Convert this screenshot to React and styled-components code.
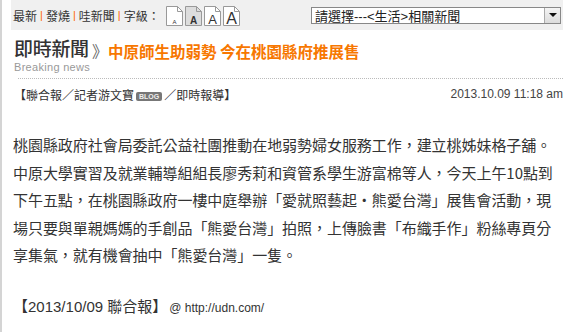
import React from "react";
import styled, { createGlobalStyle } from "styled-components";

const Global = createGlobalStyle`
  html, body { margin: 0; padding: 0; background: #fff; }
  body { font-family: "Liberation Sans", Arial, "Noto Sans CJK TC", sans-serif; color: #333; }
`;

const Page = styled.div`
  width: 574px;
  height: 332px;
  box-sizing: border-box;
  border-left: 2px solid #d4d4d4;
  padding: 0 11px 0 9px;
  overflow: hidden;
`;

const TopBar = styled.div`
  display: flex;
  align-items: center;
  justify-content: space-between;
  height: 30px;
  background: #f0f0f0;
  padding: 0 2px 0 2px;
`;

const NavLinks = styled.div`
  display: flex;
  align-items: center;
  font-size: 12px;
  color: #333;
  font-family: "Liberation Sans", "Noto Sans CJK TC", sans-serif;
`;

const Sep = styled.span`
  color: #f60;
  margin: 0 3px;
  font-size: 11px;
`;

const SizeButtons = styled.div`
  display: flex;
  gap: 2px;
  margin-left: 6px;
  padding-top: 2px;
`;

const PageIcon = ({ fill, size }) => (
  <svg width="17" height="20" viewBox="0 0 17 20">
    <path d="M0.5 0.5 H11.5 L16.5 5.5 V19.5 H0.5 Z" fill={fill} stroke="#999" />
    <path d="M11.5 0.5 V5.5 H16.5" fill="none" stroke="#999" />
    <text
      x="8.5"
      y="17.5"
      textAnchor="middle"
      fontFamily="Liberation Sans, Arial, sans-serif"
      fontSize={size}
      fill="#333"
      fontWeight={size === 10 ? "bold" : "normal"}
    >
      A
    </text>
  </svg>
);

const Select = styled.div`
  display: flex;
  align-items: center;
  justify-content: space-between;
  width: 250px;
  height: 17px;
  box-sizing: border-box;
  border: 1px solid #888;
  background: #fff;
  font-size: 13px;
  color: #222;
  padding-left: 3px;
  font-family: "Liberation Sans", "Noto Sans CJK TC", sans-serif;
`;

const Arrow = styled.div`
  width: 15px;
  height: 15px;
  background: linear-gradient(#f4f4f4, #dcdcdc);
  border-left: 1px solid #aaa;
  display: flex;
  align-items: center;
  justify-content: center;
  &::after {
    content: "";
    border-left: 4px solid transparent;
    border-right: 4px solid transparent;
    border-top: 4px solid #111;
  }
`;

const TitleRow = styled.div`
  display: flex;
  align-items: flex-start;
  padding: 7px 0 0 3px;
  height: 48px;
  box-sizing: border-box;
`;

const Section = styled.div`
  display: flex;
  flex-direction: column;
`;

const SectionName = styled.div`
  font-size: 19px;
  line-height: 22px;
  color: #333;
  font-family: "Noto Sans CJK TC", sans-serif;
  font-weight: 500;
  letter-spacing: -0.3px;
`;

const SectionEn = styled.div`
  font-size: 11px;
  line-height: 11px;
  color: #999;
  margin-top: 3px;
  letter-spacing: 0.3px;
`;

const Chevron = styled.span`
  font-size: 16px;
  color: #666;
  margin: 3px 0 0 2px;
  line-height: 20px;
  font-family: "Noto Sans CJK TC", sans-serif;
`;

const Headline = styled.h1`
  margin: 4px 0 0;
  font-size: 15.5px;
  line-height: 20px;
  font-weight: bold;
  color: #f77700;
  font-family: "Noto Sans CJK TC", sans-serif;
`;

const Dotted = styled.div`
  margin: 0 0 0 7px;
  border-top: 1px dotted #bbb;
`;

const Byline = styled.div`
  display: flex;
  justify-content: space-between;
  align-items: center;
  font-size: 12px;
  color: #333;
  padding: 5px 0 0 3px;
  height: 20px;
`;

const Blog = styled.span`
  display: inline-block;
  font-size: 7px;
  line-height: 9px;
  padding: 0 3px;
  background: #777;
  color: #eee;
  border-radius: 2px;
  vertical-align: 1px;
  margin: 0 2px;
  font-weight: bold;
`;

const DateText = styled.span`
  color: #444;
  font-size: 12px;
`;

const Body = styled.p`
  margin: 27px 0 0 2px;
  font-size: 15px;
  line-height: 27.5px;
  color: #333;
  font-family: "Noto Sans CJK TC", sans-serif;
  letter-spacing: -0.05px;
`;

const Source = styled.div`
  margin: 26px 0 0 2px;
  font-size: 15px;
  color: #333;
  font-family: "Liberation Sans", "Noto Sans CJK TC", sans-serif;
`;

const Url = styled.span`
  font-size: 12px;
  margin-left: 2px;
`;

export default function App() {
  return (
    <>
      <Global />
      <Page>
        <TopBar>
          <NavLinks>
            最新<Sep>|</Sep>發燒<Sep>|</Sep>哇新聞<Sep>|</Sep>字級：
            <SizeButtons>
              <PageIcon fill="#fff" size={6} />
              <PageIcon fill="#ddd" size={10} />
              <PageIcon fill="#fff" size={13} />
              <PageIcon fill="#fff" size={16} />
            </SizeButtons>
          </NavLinks>
          <Select>
            <span>請選擇---&lt;生活&gt;相關新聞</span>
            <Arrow />
          </Select>
        </TopBar>
        <TitleRow>
          <Section>
            <SectionName>即時新聞</SectionName>
            <SectionEn>Breaking news</SectionEn>
          </Section>
          <Chevron>》</Chevron>
          <Headline>中原師生助弱勢 今在桃園縣府推展售</Headline>
        </TitleRow>
        <Dotted />
        <Byline>
          <span>
            【聯合報／記者游文寶<Blog>BLOG</Blog>／即時報導】
          </span>
          <DateText>2013.10.09 11:18 am</DateText>
        </Byline>
        <Body>
          桃園縣政府社會局委託公益社團推動在地弱勢婦女服務工作，建立桃姊妹格子舖。中原大學實習及就業輔導組組長廖秀莉和資管系學生游富棉等人，今天上午10點到下午五點，在桃園縣政府一樓中庭舉辦「愛就照藝起‧熊愛台灣」展售會活動，現場只要與單親媽媽的手創品「熊愛台灣」拍照，上傳臉書「布織手作」粉絲專頁分享集氣，就有機會抽中「熊愛台灣」一隻。
        </Body>
        <Source>
          【2013/10/09 聯合報】<Url>@ http://udn.com/</Url>
        </Source>
      </Page>
    </>
  );
}
